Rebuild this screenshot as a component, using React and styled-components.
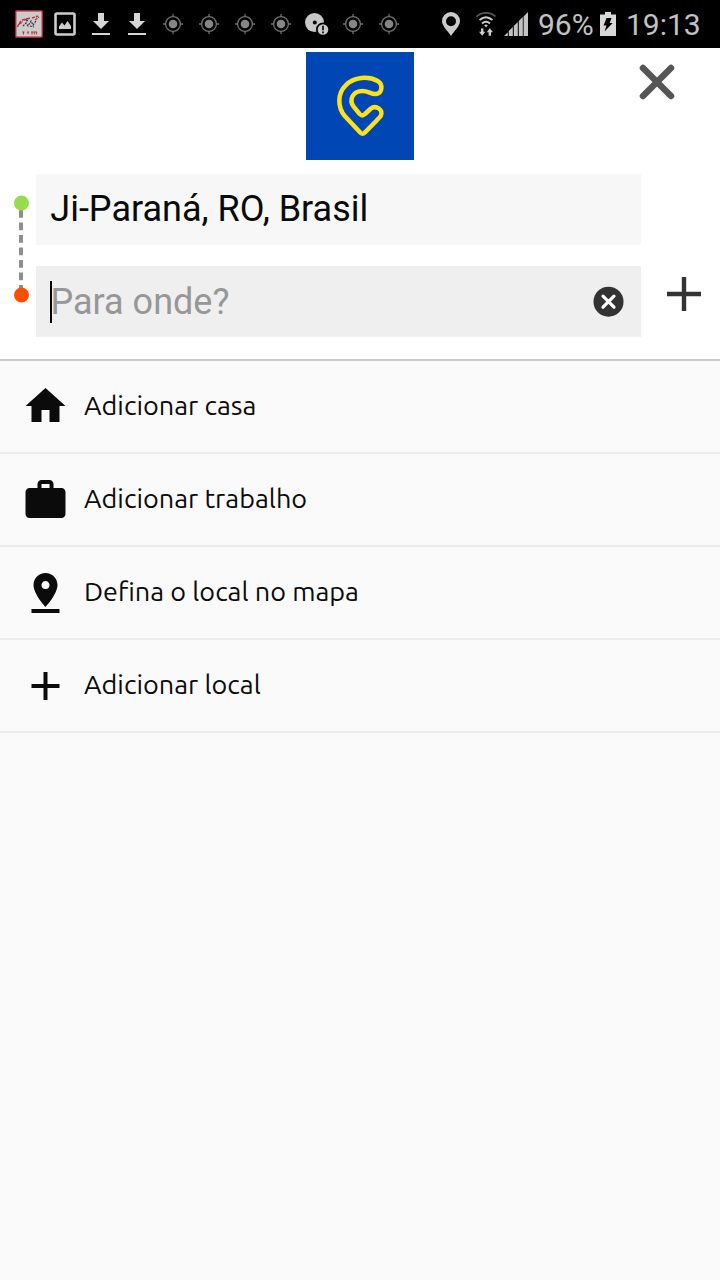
import { MdAdd, MdHome, MdPinDrop, MdWork } from 'react-icons/md'
import styled, { createGlobalStyle } from 'styled-components'

const GlobalStyle = createGlobalStyle`
    * {
        box-sizing: border-box;
    }
    body {
        margin: 0;
        background-color: #fafafa;
        font-family: Roboto, sans-serif;
    }
    svg {
        display: block;
        flex-shrink: 0;
    }
`

const Container = styled.div`
    width: 720px;
    height: 1280px;
    display: flex;
    flex-direction: column;
    overflow: hidden;
    background-color: #fafafa;
`

const StatusBar = styled.div`
    height: 48px;
    display: flex;
    align-items: center;
    padding-left: 11px;
    background-color: #000;
    color: #c2c2c2;
`

const Slot = styled.div`
    width: 36px;
    height: 48px;
    flex-shrink: 0;
    display: flex;
    align-items: center;
    justify-content: center;
`

const Indicator = styled.div`
    flex-shrink: 0;
    margin-left: ${(props) => props.$gap || 0}px;
`

const StatusText = styled.span`
    width: ${(props) => props.$width}px;
    flex-shrink: 0;
    margin-left: 10px;
    padding-top: 2px;
    font-size: 30px;
    line-height: 48px;
    white-space: nowrap;
`

const Header = styled.header`
    height: 313px;
    display: flex;
    flex-direction: column;
    background-color: #fff;
    border-bottom: 2px solid #c9cbcb;
`

const TopRow = styled.div`
    height: 126px;
    padding-top: 4px;
    display: grid;
    grid-template-columns: 306px 108px 1fr;
    align-items: start;
`

const Logo = styled.div`
    grid-column: 2;
    width: 108px;
    height: 108px;
    background-color: #0046b5;
`

const IconButton = styled.button`
    border: none;
    padding: 0;
    background: none;
    cursor: pointer;
`

const CloseButton = styled(IconButton)`
    justify-self: end;
    margin: 10px 43px 0 0;
`

const Route = styled.div`
    display: flex;
    align-items: flex-start;
`

const Track = styled.div`
    width: 36px;
    padding: 21px 0 0 13px;
`

const Fields = styled.div`
    width: 605px;
    display: flex;
    flex-direction: column;
    gap: 21px;
`

const Field = styled.div`
    height: 71px;
    display: flex;
    align-items: center;
    padding: 0 17px 1px 14px;
    font-size: 36px;
    line-height: 42px;
    color: ${(props) => (props.$active ? '#979797' : '#0a0a0a')};
    background-color: ${(props) => (props.$active ? '#efefef' : '#f7f7f7')};
`

const Caret = styled.span`
    width: 2px;
    height: 42px;
    margin: 2px -2px 0 0;
    background-color: #000;
`

const FieldText = styled.span`
    flex: 1;
    padding: ${(props) => (props.$placeholder ? '2px 0 0 0.5px' : '0 0 0 0.3px')};
    white-space: nowrap;
`

const AddStop = styled(IconButton)`
    margin: 103px 0 0 26px;
`

const Options = styled.ul`
    flex: 1;
    margin: 0;
    padding: 0;
    list-style: none;
`

const Option = styled.li`
    height: 93px;
    display: flex;
    align-items: center;
    gap: 15px;
    padding-left: 21px;
    color: #0b0b0b;
    border-bottom: 2px solid #ececec;

    svg {
        transform: translate(0.5px, ${(props) => props.$lift || 0}px);
    }
`

const Label = styled.span`
    font-family: Ubuntu, 'Noto Sans', sans-serif;
    font-size: 27px;
    line-height: 36px;
    padding-bottom: 4px;
    white-space: nowrap;
`

const Thumbnail = () => (
    <svg width="28" height="28" viewBox="0 0 28 28">
        <rect x="0.7" y="0.7" width="26.6" height="26.6" rx="1" fill="#cfcbcb" stroke="#a32638" strokeWidth="1.4"/>
        <path d="M2.5 17C5 10 10 8 14 9M4 14l4-2M17 8l6-2M20 10l4-3M9 10l6-2" fill="none" stroke="#b03545" strokeWidth="1.4" strokeDasharray="3 1"/>
        <path d="M8 16l3-3 2 3 3-5 2 4 3-4M11 11l3-1M15 16l4 1" fill="none" stroke="#333" strokeWidth="1.2" strokeDasharray="2 1"/>
        <path d="M7 22h2.500M8.500 22v2.500M12 22h2M13 22v2M16 22h6M17 22v2.500M19.300 22v2.500M21.600 22v2.500" stroke="#b03545" strokeWidth="1"/>
    </svg>
)

const Picture = () => (
    <svg width="22" height="24" viewBox="0 0 22 24">
        <rect x="1.500" y="1.500" width="19" height="21" rx="1.500" fill="none" stroke="#cdcdcd" strokeWidth="2.600"/>
        <path d="M5 17v-2.500l3-4 2.500 3 3-4.500 3.500 5V17z" fill="#cdcdcd"/>
    </svg>
)

const Download = () => (
    <svg width="18" height="22" viewBox="0 0 18 22">
        <path d="M6 0h6v8h5l-8 8-8-8h5zM0 20h18v2H0z" fill="#d6d6d6"/>
    </svg>
)

const Gps = () => (
    <svg width="20" height="20" viewBox="0 0 20 20">
        <circle cx="10" cy="10" r="4.300" fill="#858585"/>
        <circle cx="10" cy="10" r="7.400" fill="none" stroke="#707070" strokeWidth="1.300"/>
        <path d="M10 0v3M10 17v3M0 10h3M17 10h3" stroke="#707070" strokeWidth="1.300"/>
    </svg>
)

const DiscAlert = () => (
    <svg width="24" height="22" viewBox="0 0 24 22">
        <circle cx="9.500" cy="9.500" r="9.500" fill="#c8c8c8"/>
        <circle cx="9.800" cy="9.500" r="2" fill="#000"/>
        <circle cx="18" cy="16.500" r="7" fill="#000"/>
        <circle cx="18" cy="16.500" r="5.300" fill="#c8c8c8"/>
        <path d="M18 12.800v4.400M18 18.500v1.700" stroke="#111" strokeWidth="1.800"/>
    </svg>
)

const Location = () => (
    <svg width="18" height="24" viewBox="0 0 18 24">
        <path d="M9 0a9 9 0 0 0-9 9c0 5 5 9 9 15 4-6 9-10 9-15a9 9 0 0 0-9-9zm0 4.200a5 5 0 1 1 0 10 5 5 0 0 1 0-10z" fill="#cbcbcb"/>
    </svg>
)

const Wifi = () => (
    <svg width="20" height="24" viewBox="0 0 20 24">
        <g fill="none" strokeWidth="1.900">
            <path d="M0.500 4.500C6-0.300 14-0.300 19.500 4.500" stroke="#555"/>
            <path d="M3.500 8C7.500 4.600 12.500 4.600 16.500 8" stroke="#cbcbcb"/>
            <path d="M6 11.500C8.500 9.300 11.500 9.300 14 11.500" stroke="#cbcbcb"/>
        </g>
        <path d="M8.200 13.200q1.800-1.400 3.600 0L10 15.500z" fill="#cbcbcb"/>
        <path d="M5 16.500h2.400v3.300h2L6.200 23.700 3 19.800h2zM12.600 23.700H15v-3.500h2L13.800 16.300 10.700 20.200h1.900z" fill="#cbcbcb"/>
    </svg>
)

const Signal = () => (
    <svg width="24" height="24" viewBox="0 0 24 24">
        <path d="M0 24l3.800-3.800V24zM4.800 24v-5l4-4V24zM9.800 24V14l4-4V24zM14.800 24V9l4-4V24zM19.600 24V4.400L24 0v24z" fill="#c4c4c4"/>
    </svg>
)

const Battery = () => (
    <svg width="16" height="24" viewBox="0 0 16 24">
        <path d="M5 0h6v2.500h5V24H0V2.500h5z" fill="#d8d8d8"/>
        <path d="M6.500 6h5l-1.800 5h3L4.500 19.500l2-6H3.600z" fill="#000"/>
    </svg>
)

const LogoMark = () => (
    <svg width="108" height="108" viewBox="-72 -54 324 324">
        <path
            d="M90 187L45 139C22 112 22 70 47 46C72 20 116 18 143 33C161 44 156 70 138 72C122 73 116 63 97 63C68 63 56 90 71 110L89 132Q97 140 105 132L121 117C138 103 162 120 152 138Q148 144 105 187Q97 195 90 187Z"
            fill="none"
            stroke="#fbe21a"
            strokeWidth="13.500"
            strokeLinejoin="round"
        />
    </svg>
)

const Close = () => (
    <svg width="40" height="40" viewBox="0 0 40 40">
        <path d="M6 6l28 28M34 6L6 34" stroke="#555" strokeWidth="6.500" strokeLinecap="round"/>
    </svg>
)

const RouteLine = () => (
    <svg width="18" height="108" viewBox="0 0 18 108">
        <path d="M8 15v78" stroke="#8f8f8f" strokeWidth="4" strokeDasharray="7.700 4.800"/>
        <circle cx="8.500" cy="8" r="7.500" fill="#97db4f"/>
        <circle cx="8.500" cy="100" r="7.500" fill="#ff4e00"/>
    </svg>
)

const Clear = () => (
    <svg width="31" height="31" viewBox="0 0 31 31">
        <circle cx="15.500" cy="15.700" r="15" fill="#333"/>
        <path d="M10 10.200l11 11M21 10.200L10 21.200" stroke="#fff" strokeWidth="3.200" strokeLinecap="round"/>
    </svg>
)

const Plus = () => (
    <svg width="34" height="34" viewBox="0 0 34 34">
        <path d="M17 0v34M0 17h34" stroke="#333" strokeWidth="4.400"/>
    </svg>
)

const notifications = [Thumbnail, Picture, Download, Download, Gps, Gps, Gps, Gps, DiscAlert, Gps, Gps]

const options = [
    { label: 'Adicionar casa', icon: MdHome, lift: -1 },
    { label: 'Adicionar trabalho', icon: MdWork },
    { label: 'Defina o local no mapa', icon: MdPinDrop },
    { label: 'Adicionar local', icon: MdAdd },
]

const App = () => {
    return (
        <>
            <GlobalStyle/>
            <Container>
                <StatusBar>
                    {notifications.map((Icon, i) => (
                        <Slot key={i}><Icon/></Slot>
                    ))}
                    <Indicator $gap={35}><Location/></Indicator>
                    <Indicator $gap={15.5}><Wifi/></Indicator>
                    <Indicator $gap={8.5}><Signal/></Indicator>
                    <StatusText $width={62}>96%</StatusText>
                    <Indicator><Battery/></Indicator>
                    <StatusText $width={80}>19:13</StatusText>
                </StatusBar>
                <Header>
                    <TopRow>
                        <Logo><LogoMark/></Logo>
                        <CloseButton aria-label="Fechar"><Close/></CloseButton>
                    </TopRow>
                    <Route>
                        <Track><RouteLine/></Track>
                        <Fields>
                            <Field>
                                <FieldText>Ji-Paraná, RO, Brasil</FieldText>
                            </Field>
                            <Field $active>
                                <Caret/>
                                <FieldText $placeholder>Para onde?</FieldText>
                                <Clear/>
                            </Field>
                        </Fields>
                        <AddStop aria-label="Adicionar parada"><Plus/></AddStop>
                    </Route>
                </Header>
                <Options>
                    {options.map(({ label, icon: Icon, lift }) => (
                        <Option key={label} $lift={lift}>
                            <Icon size={48}/>
                            <Label>{label}</Label>
                        </Option>
                    ))}
                </Options>
            </Container>
        </>
    )
}

export default App
